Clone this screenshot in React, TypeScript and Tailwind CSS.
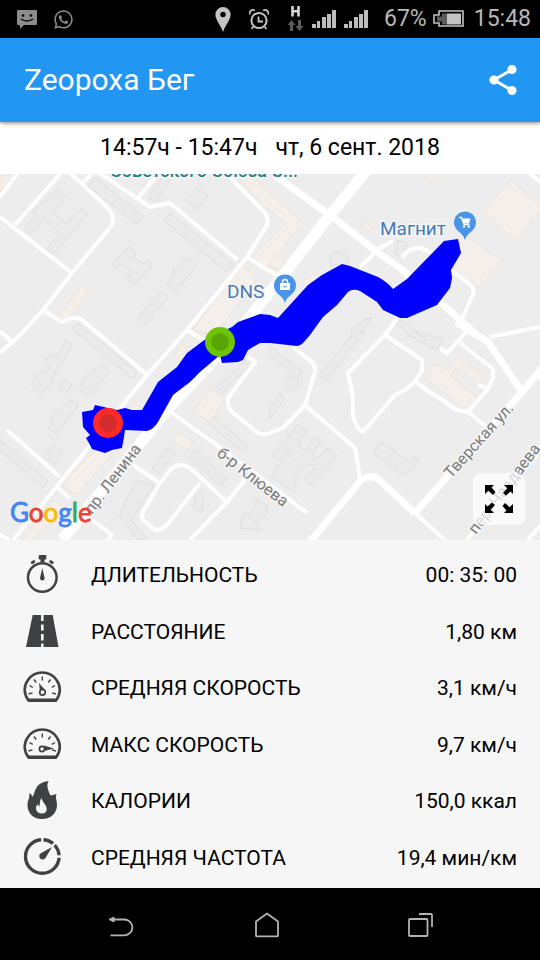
import { ReactNode } from "react";
import { FaWhatsapp } from "react-icons/fa";

const ROADS_WIDE = [
  "M367-4L330 41L270 118L220 180L167 236L62 366",
];

const ROADS_MEDIUM = [
  "M274 1L330 41L377 78L400 94L440 128L477 161",
  "M456 148L488 168L522 218",
  "M544 192L522 218L415 339",
  "M310 368L361 306Q367 301 377 304L415 339",
];

const ROADS_NARROW = [
  "M0 23L17 0",
  "M60 0L15 51",
  "M0 43L72 99",
  "M69-2L108 34Q114 42 113 50L72 99L43 136L20 161L0 179",
  "M0 157L13 169",
  "M83 8L92 0",
  "M98-2L150 33L170 29L238 86",
  "M138 24L158 0",
  "M225-2L265 39Q270 46 266 53L247 83L187 156L147 201L58 311L13 366",
  "M247 83L276 101",
  "M43 136L62 148L72 144Q78 143 82 146L100 161L147 201",
  "M187 156L207 168",
  "M7 256L60 303",
  "M57 313L70 325",
  "M92 346L112 361L106 368",
  "M172 239L222 275L307 339",
  "M133 291L160 309",
  "M200 309L167 351Q158 359 152 354L143 346Q140 341 144 336L160 309L172 294Q181 288 190 294L227 328L188 368",
  "M227 328L245 306",
  "M293 173L312 188Q316 192 315 198L305 231L283 254L270 259Q264 262 258 259L232 238Q227 233 228 224L255 188L248 183",
  "M305 231L355 274L360 303",
  "M385 161L348 199L353 223V241Q356 255 363 258L395 221L405 216L415 208L422 196V186L385 161L400 140",
  "M415 208L457 236L468 238L488 254",
  "M468 238L487 216L493 204V195L460 169",
  "M478 210L486 215",
  "M440 174L447 179L468 156",
  "M360 93L380 74L393 67",
  "M402 84Q408 73 420 74Q438 80 453 98L470 110Q475 114 473 121L462 144",
  "M490 163L540 153",
  "M535 199L542 205",
  "M415 339L447 368",
  "M467 366L544 272",
  "M526 368L542 350",
  "M0 361L10 366",
  "M530 0L542 9",
];

const HOUSES = [
  "M58 15L65 23L53 38L66 50L81 34L88 40L53 80L47 75L60 60L44 45L30 60L24 55L35 42L33 37Z",
  "M94 3L143 42L137 50L88 12Z",
  "M129 73L136 79L134 84L142 89L150 87L151 93L134 111L127 106L130 98L122 90L116 95L112 90Z",
  "M190 84L197 91L176 118L167 110L174 100L173 96Z",
  "M161 118L168 124L145 150L139 145L142 139Z",
  "M170 39L233 90L227 98L164 47Z",
  "M197 14L208 22L197 35L185 26Z",
  "M148 24L164 0H174L156 28Z",
  "M78 149L137 198L133 205L72 154Z",
  "M66 166L72 171L65 185L56 196L50 211L40 220L31 211L38 200L50 196L44 186L60 178Z",
  "M102 190L109 197L90 222L79 216L85 203Z",
  "M64 205L72 211L66 219L58 213Z",
  "M72 226L78 231L57 260L49 255L54 241Z",
  "M53 271L62 279L55 290L44 283Z",
  "M0 266L48 307L43 314L0 276Z",
  "M168 273L175 279L159 300L152 294Z",
  "M195 276L226 304L221 312L189 284Z",
  "M136 307L154 311L131 346L146 364L138 366L119 341Z",
  "M196 315L203 319L202 338L194 334Z",
  "M245 187L249 192L219 222L213 216Z",
  "M214 242L247 272L243 278L208 249Z",
  "M257 325L268 332L265 342L255 348L262 356L240 354L243 340L252 338Z",
  "M270 172L302 198L297 206L302 209L292 217L285 211L292 199L270 180Z",
  "M279 219L285 224L270 245V235Z",
  "M297 251L307 257L298 270L305 276L315 263L321 267L312 280L318 284L327 274L337 281L312 312L304 306L316 291L308 290L296 303V310L291 316L271 303L278 291L292 281L287 279L281 287L272 282Z",
  "M381 267L409 288L415 283L419 286L404 302L373 279Z",
  "M366 156L326 207L319 202L350 163Z",
  "M372 144L356 164L350 159L365 145Z",
  "M412 156L443 165L437 176L407 160Z",
  "M400 146L427 166L420 168L396 150Z",
  "M398 66L407 69L402 84L396 80Z",
  "M330 82Q334 75 342 79Q352 84 348 93L340 90L330 92Z",
];

const SHOPS = [
  "M238 92L255 100L256 108L214 161L193 156Z",
  "M264 74L284 90L278 96L253 82Z",
  "M235 0H250L302 49L267 94L253 83L286 50L262 30Z",
  "M511 6L542 33L516 67L484 38Z",
  "M453 72L462 60L502 87L479 113L451 95Z",
  "M364 47L373 53L368 58L361 53Z",
  "M422 0H430L435 5L431 8Z",
  "M313 99L317 103L307 114L302 108Z",
  "M82 112L89 118L66 147L58 143Z",
  "M212 214L224 226L209 249L194 237Z",
  "M179 258L193 267L188 276L173 266Z",
  "M100 272L113 280L76 321L61 311Z",
  "M53 326L64 334L33 366H22Z",
  "M181 170L187 175L179 188L175 182Z",
  "M457 183L483 203L479 209L456 194L450 201L478 225L469 238L426 205L435 190L447 196Z",
  "M0 5L8 0L12 4L0 18Z",
  "M134 229L142 234L138 240L127 236Z",
];

const TRACK =
  "M82 238L93 236L95 231L108 234L117 236L125 234L132 236H142L158 208L177 193L187 179L207 164L232 153L238 148L260 140L270 141L278 144L308 111L322 101L342 90L350 92L378 103Q386 107 393 115L407 105L444 67L458 65L461 79L451 96L452 104L450 114L437 131L407 144L400 144L383 136L377 128L360 117Q353 114 348 118L337 131L323 143L310 161L303 169Q300 172 297 172L270 169H260L248 176L243 186L238 188L222 189L220 181L200 198L190 208L173 221L158 248Q154 255 147 257L125 256L124 263L122 274L112 276L105 279L92 275L90 271L86 264L90 261L83 253Z";

const Signal = () => (
  <svg width="24" height="18" viewBox="0 0 24 18" fill="#bdbdbd">
    <path d="M0 14h4v4H0zM5 11h3v7H5zM10 7h4v11h-4zM15 4h4v14h-4zM20 0h4v18h-4z" />
  </svg>
);

const StatusBar = () => (
  <div className="flex h-[38px] shrink-0 items-center bg-black pl-[17px] pr-[9px] text-[23px] leading-6 text-[#b8b8b8]">
    {/* notifications */}
    <div className="flex items-center gap-4">
      <svg width="20" height="20" viewBox="0 0 20 20">
        <path d="M1 1h18q1 0 1 1v13q0 1-1 1H7l-4 4v-4H1q-1 0-1-1V2q0-1 1-1z" fill="#8c8c8c" />
        <path d="M4 10q6 4 12 0" fill="none" stroke="#000" strokeWidth="1.4" />
        <circle cx="6" cy="6.500" r="1.300" />
        <circle cx="14" cy="6.500" r="1.300" />
      </svg>
      <FaWhatsapp className="size-[21px] text-[#8c8c8c]" />
    </div>

    {/* system icons */}
    <div className="ml-auto flex items-center">
      <svg className="mr-[18px]" width="16" height="25" viewBox="0 0 16 25">
        <path
          d="M8 0a7.600 7.600 0 0 0-7.600 7.600C.4 13 5 17 8 25c3-8 7.600-12 7.600-17.400A7.600 7.600 0 0 0 8 0zm0 4.800a2.700 2.700 0 1 1 0 5.400 2.700 2.700 0 0 1 0-5.400z"
          fill="#c4c4c4"
        />
      </svg>
      <svg className="mr-[18px]" width="20" height="21" viewBox="0 0 20 21" fill="none" stroke="#c4c4c4">
        <circle cx="10" cy="11.500" r="7.600" strokeWidth="2" />
        <path d="M9.500 7.500v5H14M4.500 17.500l-2 2.500M15.500 17.500l2 2.500" strokeWidth="1.800" />
        <path d="M.8 5.500a3.400 3.400 0 0 1 5-4M19.200 5.500a3.400 3.400 0 0 0-5-4" strokeWidth="1.800" />
      </svg>
      <svg className="mr-2" width="17" height="26" viewBox="0 0 17 26">
        <path d="M5.500 0v10.500M11.500 0v10.500M5.500 5.300h6" stroke="#d6d6d6" strokeWidth="2.600" fill="none" />
        <path d="M4.500 14L.5 19H3v6h3v-6h2.500zM12.500 25l4-5H14v-6h-3v6H8.500z" fill="#5c5c5c" />
      </svg>
      <div className="mr-4 flex gap-2">
        <Signal />
        <Signal />
      </div>
      <span className="mr-1.5">67%</span>
      <svg className="mr-2.5" width="31" height="18" viewBox="0 0 31 18">
        <path d="M6 1h24v15H6v-3H1V5h5z" fill="none" stroke="#c4c4c4" strokeWidth="1.600" />
        <path d="M9 3.500h5v11H9v-3H4v-5h5z" fill="#5c5c5c" />
        <path d="M14 3.500h14v11H14z" fill="#c4c4c4" />
      </svg>
      <span>15:48</span>
    </div>
  </div>
);

const Header = () => (
  <header className="relative z-10 flex h-[84px] shrink-0 items-center justify-between bg-[#2196f3] px-6 text-white shadow-[0_1px_4px_rgba(0,0,0,0.5)]">
    <h1 className="text-[30px] leading-8">Zeopoxa Бег</h1>
    <button type="button" aria-label="Поделиться" className="-mr-2 p-1">
      <svg width="32" height="32" viewBox="0 0 32 32" fill="#fff">
        <path d="M24 5.500L6 16l18 10.500" fill="none" stroke="#fff" strokeWidth="3" />
        <circle cx="24" cy="5.500" r="4.600" />
        <circle cx="6" cy="16" r="4.600" />
        <circle cx="24" cy="26.500" r="4.600" />
      </svg>
    </button>
  </header>
);

const Pin = ({ x, y, children }: { x: number; y: number; children: ReactNode }) => (
  <g transform={`translate(${x} ${y})`}>
    <path
      d="M0 19C-1 13-4 12-8 8A11 11 0 1 1 8 8C4 12 1 13 0 19z"
      fill="#4a94ea"
      stroke="#fff"
      strokeWidth="1"
      paintOrder="stroke"
    />
    {children}
  </g>
);

const RouteMap = () => (
  <div className="relative shrink-0 overflow-hidden">
    <svg viewBox="0 0 540 366" className="block h-auto w-full bg-[#ededed] font-[Roboto,sans-serif]">
      <g fill="#ebebeb" stroke="#dfdfdf" strokeWidth="1" strokeLinejoin="round">
        {HOUSES.map((d) => (
          <path key={d} d={d} />
        ))}
      </g>
      <g fill="#f4efea" stroke="#f1e3d7" strokeWidth="1" strokeLinejoin="round">
        {SHOPS.map((d) => (
          <path key={d} d={d} />
        ))}
      </g>
      <g fill="none" stroke="#fff" strokeLinejoin="round">
        <g strokeWidth="4">
          {ROADS_NARROW.map((d) => (
            <path key={d} d={d} />
          ))}
        </g>
        <g strokeWidth="7">
          {ROADS_MEDIUM.map((d) => (
            <path key={d} d={d} />
          ))}
        </g>
        <g strokeWidth="11">
          {ROADS_WIDE.map((d) => (
            <path key={d} d={d} />
          ))}
        </g>
      </g>

      {/* street names */}
      <g fill="#7b7b7b" stroke="#f4f4f4" strokeWidth="3" paintOrder="stroke" fontSize="16">
        <text transform="translate(92 341) rotate(-53)">пр. Ленина</text>
        <text transform="translate(216 281) rotate(38)">б-р Клюева</text>
        <text transform="translate(451 305) rotate(-48)">Тверская ул.</text>
        <text transform="translate(476 361) rotate(-53)">пер. Чаадаева</text>
      </g>

      <path d={TRACK} fill="#0000ff" />

      {/* places */}
      <g stroke="#f6f6f6" strokeWidth="3" paintOrder="stroke" fontSize="19">
        <text x="110" y="3" fontSize="18" fontWeight="500" fill="#1d8583">
          Советского Союза С...
        </text>
        <text x="227" y="124" fill="#4a7ab5">
          DNS
        </text>
        <text x="380" y="61" fill="#4a7ab5">
          Магнит
        </text>
      </g>
      <Pin x={285} y={111}>
        <path d="M-5-2H5V5H-5z" fill="#fff" />
        <path d="M-2.500-1v-2a2.500 2.500 0 0 1 5 0v2" fill="none" stroke="#fff" strokeWidth="1.400" />
        <path d="M-2 1q2 2.500 4 0" fill="none" stroke="#4a94ea" />
      </Pin>
      <Pin x={465} y={48}>
        <path d="M-6-4.500h2.500L-1 2.500h5.500" fill="none" stroke="#fff" strokeWidth="1.400" />
        <path d="M-3-3.500H5.500L4 1.500H-1.500z" fill="#fff" />
        <circle cx="-1" cy="4.600" r="1.200" fill="#fff" />
        <circle cx="3.800" cy="4.600" r="1.200" fill="#fff" />
      </Pin>

      <circle cx="220" cy="168" r="15" fill="#6dc406" />
      <circle cx="220" cy="168" r="9" fill="#5aa505" />
      <circle cx="108" cy="249" r="15" fill="#ff2a2a" />
      <circle cx="108" cy="249" r="9" fill="#d32c2c" />

      <text x="10" y="348" fontSize="26" strokeWidth="0.800" className="font-[Lato,sans-serif]">
        <tspan fill="#4285f4" stroke="#4285f4">G</tspan>
        <tspan fill="#ea4335" stroke="#ea4335">o</tspan>
        <tspan fill="#fbbc05" stroke="#fbbc05">o</tspan>
        <tspan fill="#4285f4" stroke="#4285f4">g</tspan>
        <tspan fill="#34a853" stroke="#34a853">l</tspan>
        <tspan fill="#ea4335" stroke="#ea4335">e</tspan>
      </text>
    </svg>

    <button
      type="button"
      aria-label="На весь экран"
      className="absolute bottom-[15px] right-[15px] flex size-[52px] items-center justify-center rounded-lg bg-white/70"
    >
      <svg width="28" height="28" viewBox="0 0 28 28">
        <g id="arrow">
          <path d="M0 0H9L6.500 2.500L10.500 7L8 10L3.300 5.700L0 9z" />
        </g>
        <use href="#arrow" transform="rotate(90 14 14)" />
        <use href="#arrow" transform="rotate(180 14 14)" />
        <use href="#arrow" transform="rotate(270 14 14)" />
      </svg>
    </button>
  </div>
);

const RowIcon = ({ children }: { children: ReactNode }) => (
  <svg width="40" height="40" viewBox="0 0 40 40" fill="#404143" stroke="none">
    {children}
  </svg>
);

const Dial = ({ children }: { children: ReactNode }) => (
  <RowIcon>
    <path
      d="M6.500 32.500C1.500 26 1.500 18 6 12A17.300 17.300 0 0 1 34.500 12C39 18 39 26 34 32.500z"
      fill="none"
      stroke="#404143"
      strokeWidth="2.600"
      strokeLinejoin="round"
    />
    <path d="M5 30.500H35.500L34 34H6.500z" />
    <path
      d="M20.300 8.500v4M12 11.500l2.200 3M28.500 11.500l-2.200 3M7.500 17.500l3.200 1.800M33 17.500l-3.200 1.800M6.500 26l4-1.200M34 26l-4-1.200"
      stroke="#404143"
      strokeWidth="1.400"
    />
    {children}
  </RowIcon>
);

const stats = [
  {
    label: "ДЛИТЕЛЬНОСТЬ",
    value: "00: 35: 00",
    icon: (
      <RowIcon>
        <circle cx="20.300" cy="22.500" r="14.300" fill="none" stroke="#404143" strokeWidth="2.500" />
        <path d="M17.500 0h6q.8 0 .8.800v3q0 .8-.8.800h-1V7h-4V4.600h-1q-.8 0-.8-.8v-3q0-.8.8-.8z" />
        <path d="M8.500 7.300l3.500-2.500 1.500 2.200L10 9.500zM32 7.300l-3.500-2.500L27 7l3.500 2.500z" />
        <path d="M20.300 13l2.200 9.500a2.300 2.300 0 1 1-4.400 0z" />
      </RowIcon>
    ),
  },
  {
    label: "РАССТОЯНИЕ",
    value: "1,80 км",
    icon: (
      <RowIcon>
        <path d="M10.700 3h20l5.800 32H4z" />
        <path d="M19 3h2.600v6H19zM19 12.500h2.600v6H19zM19 22h2.600v6.500H19zM19 31.500h2.600V35H19z" fill="#f6f6f6" />
      </RowIcon>
    ),
  },
  {
    label: "СРЕДНЯЯ СКОРОСТЬ",
    value: "3,1 км/ч",
    icon: (
      <Dial>
        <path d="M17 15l6 7-5 2z" />
        <circle cx="20.500" cy="24.300" r="2.800" fill="#f6f6f6" stroke="#404143" strokeWidth="1.700" />
      </Dial>
    ),
  },
  {
    label: "МАКС СКОРОСТЬ",
    value: "9,7 км/ч",
    icon: (
      <Dial>
        <path d="M32 23.600l-10-3v5.500z" />
        <circle cx="20" cy="24" r="2.600" fill="#f6f6f6" stroke="#404143" strokeWidth="1.700" />
      </Dial>
    ),
  },
  {
    label: "КАЛОРИИ",
    value: "150,0 ккал",
    icon: (
      <RowIcon>
        <path d="M26.700 0C24 5 26 9 28.500 14.500C30 14.500 32 13.500 34.500 13C33 16 35 19 35 24C35 32 29 38 20 38S5.500 32 5.500 24C5.500 20 7.500 18 7.500 12C9 13 10 14 10.500 16C14 11 12 2 26.700 0z" />
        <path
          d="M19.500 17C20 21 25 24 24.700 28.500C24.500 31 23 32.500 20 32.500S14.500 31 14 28C13.800 26 14.500 24.500 15.500 23.500L17.500 25.500C18 22 17.500 20 19.500 17z"
          fill="#f6f6f6"
        />
      </RowIcon>
    ),
  },
  {
    label: "СРЕДНЯЯ ЧАСТОТА",
    value: "19,4 мин/км",
    icon: (
      <RowIcon>
        <circle cx="20.300" cy="18.500" r="16.800" fill="none" stroke="#404143" strokeWidth="3.400" />
        <path d="M20.300 18.500V0M20.300 18.500L34 4M20.300 18.500H40" stroke="#f6f6f6" strokeWidth="2.400" />
        <circle cx="20.300" cy="18.500" r="13" fill="#f6f6f6" />
        <path d="M30 9L23.500 20A3.400 3.400 0 1 1 18.800 15.300z" />
      </RowIcon>
    ),
  },
];

const StatList = () => (
  <dl className="flex flex-1 flex-col bg-[#f6f6f6] pb-0.5 pt-[7px] text-[21px] leading-7 text-black">
    {stats.map(({ label, value, icon }) => (
      <div key={label} className="flex min-h-14 flex-1 items-center pl-[22px] pr-[23px]">
        {icon}
        <dt className="ml-[29px]">{label}</dt>
        <dd className="ml-auto">{value}</dd>
      </div>
    ))}
  </dl>
);

const NavBar = () => (
  <nav className="grid h-[72px] shrink-0 grid-cols-[146fr_146fr_161fr] items-center justify-items-center bg-black pl-12 pr-[38px] pt-0.5">
    <button type="button" aria-label="Назад">
      <svg width="26" height="24" viewBox="0 0 26 24" fill="none" stroke="#b3b3b3" strokeWidth="1.800">
        <path d="M4 6.500H16.500a7.700 7.700 0 0 1 0 15.800H2.500" />
        <path d="M1 6.500L6 4v5z" fill="#b3b3b3" strokeWidth="1" />
      </svg>
    </button>
    <button type="button" aria-label="Домой">
      <svg width="24" height="26" viewBox="0 0 24 26" fill="none" stroke="#b3b3b3" strokeWidth="1.800">
        <path d="M1 9.500L12 1.500L23 9.500V23.500q0 .8-.8.800H1.800q-.8 0-.8-.8z" strokeLinejoin="round" />
      </svg>
    </button>
    <button type="button" aria-label="Недавние приложения">
      <svg width="26" height="26" viewBox="0 0 26 26" fill="none" stroke="#b3b3b3" strokeWidth="1.800">
        <rect x="1" y="7" width="18.500" height="17" rx="1" />
        <path d="M11 2H23q1 0 1 1V15" />
      </svg>
    </button>
  </nav>
);

const App = () => {
  return (
    <div className="flex min-h-screen flex-col bg-white font-[Roboto,sans-serif]">
      <StatusBar />
      <Header />
      <main className="flex flex-1 flex-col">
        <p className="flex h-[52px] shrink-0 items-center justify-center gap-[18px] text-[23px] leading-7 text-black">
          <span>14:57ч - 15:47ч</span>
          <span>чт, 6 сент. 2018</span>
        </p>
        <RouteMap />
        <StatList />
      </main>
      <NavBar />
    </div>
  );
};

export default App;
